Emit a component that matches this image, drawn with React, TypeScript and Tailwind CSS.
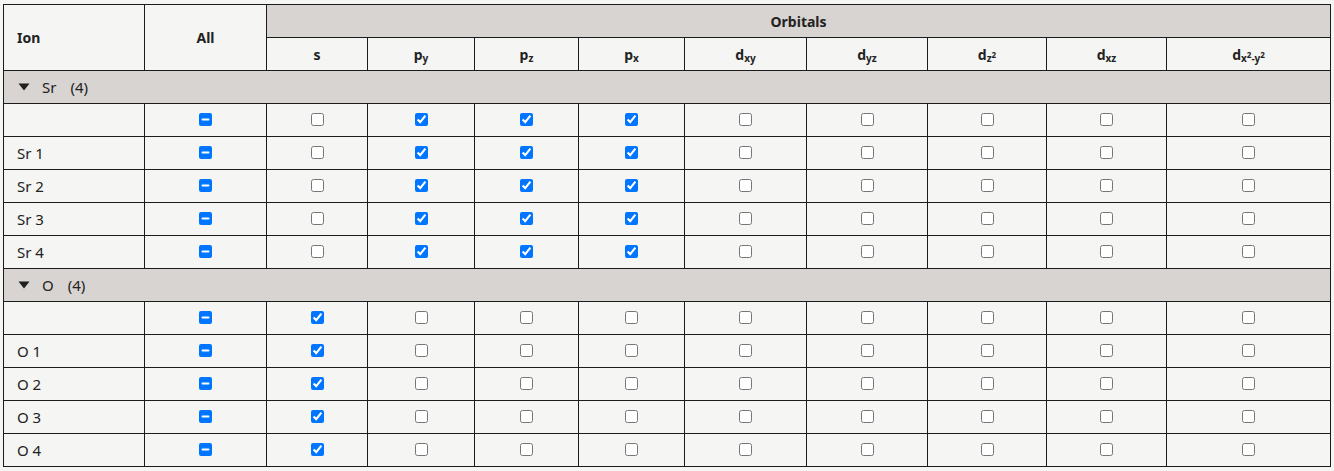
import React, { useEffect, useRef } from "react";

const cols = [
  { key: "s", w: 101 },
  { key: "py", w: 107 },
  { key: "pz", w: 104 },
  { key: "px", w: 106 },
  { key: "dxy", w: 122 },
  { key: "dyz", w: 121 },
  { key: "dz2", w: 119 },
  { key: "dxz", w: 120 },
  { key: "dx2y2", w: 164 },
];

function Label({ k }: { k: string }) {
  const sub = "text-[10px]";
  const sup = "text-[8px]";
  switch (k) {
    case "s":
      return <span>s</span>;
    case "py":
      return (
        <span>
          p<sub className={sub}>y</sub>
        </span>
      );
    case "pz":
      return (
        <span>
          p<sub className={sub}>z</sub>
        </span>
      );
    case "px":
      return (
        <span>
          p<sub className={sub}>x</sub>
        </span>
      );
    case "dxy":
      return (
        <span>
          d<sub className={sub}>xy</sub>
        </span>
      );
    case "dyz":
      return (
        <span>
          d<sub className={sub}>yz</sub>
        </span>
      );
    case "dz2":
      return (
        <span>
          d<sub className={sub}>z<sup className={sup}>2</sup></sub>
        </span>
      );
    case "dxz":
      return (
        <span>
          d<sub className={sub}>xz</sub>
        </span>
      );
    default:
      return (
        <span>
          d<sub className={sub}>x<sup className={sup}>2</sup>-y<sup className={sup}>2</sup></sub>
        </span>
      );
  }
}

function Box({ checked, indeterminate }: { checked?: boolean; indeterminate?: boolean }) {
  const ref = useRef<HTMLInputElement>(null);
  useEffect(() => {
    if (ref.current) ref.current.indeterminate = !!indeterminate;
  }, [indeterminate]);
  return (
    <input
      ref={ref}
      type="checkbox"
      readOnly
      checked={!!checked}
      className="relative -top-[1px] mx-auto my-0 block h-[13px] w-[13px]"
    />
  );
}

const cell = "border border-[#1c1c1c] h-[33px] p-0 align-middle";

function Group({ name, checkedKeys }: { name: string; checkedKeys: string[] }) {
  const rows = ["", `${name} 1`, `${name} 2`, `${name} 3`, `${name} 4`];
  return (
    <>
      <tr className="bg-[#d8d4d1]">
        <td colSpan={11} className={`${cell} pl-[14px] text-[15px] text-[#222]`}>
          <span className="flex items-center leading-none">
            <svg width="12" height="8" viewBox="0 0 12 8" className="mr-[12px]">
              <path d="M0.5 0.5 L11.5 0.5 L6 7.5 Z" fill="#1f1f1f" />
            </svg>
            <span>{name}</span>
            <span className="ml-[14px]">(4)</span>
          </span>
        </td>
      </tr>
      {rows.map((r, i) => (
        <tr key={i}>
          <td className={`${cell} pl-[13px] text-[15px] text-[#222]`}>{r}</td>
          <td className={cell}>
            <Box indeterminate />
          </td>
          {cols.map((c) => (
            <td key={c.key} className={cell}>
              <Box checked={checkedKeys.includes(c.key)} />
            </td>
          ))}
        </tr>
      ))}
    </>
  );
}

export default function App() {
  return (
    <div
      className="min-h-[471px] bg-[#f5f5f4] pl-[3px] pt-[4px]"
      style={{ fontFamily: "'Noto Sans', Lato, sans-serif" }}
    >
      <table className="table-fixed border-collapse w-[1328px] text-[#222]">
        <colgroup>
          <col style={{ width: 141 }} />
          <col style={{ width: 122 }} />
          {cols.map((c) => (
            <col key={c.key} style={{ width: c.w }} />
          ))}
        </colgroup>
        <thead>
          <tr>
            <th rowSpan={2} className={`${cell} pl-[13px] text-left text-[14px] font-bold`}>
              Ion
            </th>
            <th rowSpan={2} className={`${cell} text-center text-[14px] font-bold`}>
              All
            </th>
            <th colSpan={9} className={`${cell} bg-[#d8d4d1] text-center text-[14px] font-bold`}>
              Orbitals
            </th>
          </tr>
          <tr>
            {cols.map((c) => (
              <th key={c.key} className={`${cell} text-center text-[14px] font-bold`}>
                <Label k={c.key} />
              </th>
            ))}
          </tr>
        </thead>
        <tbody>
          <Group name="Sr" checkedKeys={["py", "pz", "px"]} />
          <Group name="O" checkedKeys={["s"]} />
        </tbody>
      </table>
    </div>
  );
}
